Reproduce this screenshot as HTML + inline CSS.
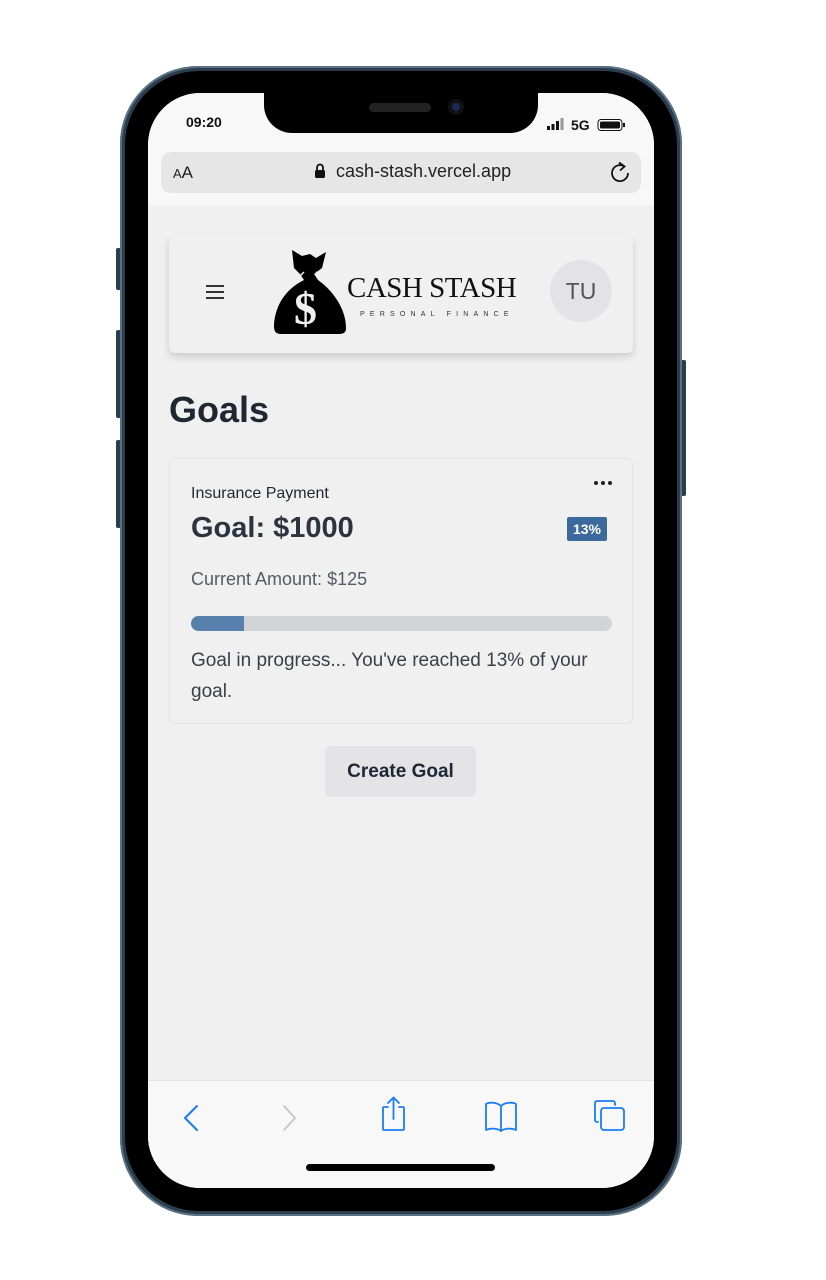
<!DOCTYPE html>
<html><head><meta charset="utf-8">
<style>
*{box-sizing:border-box;margin:0;padding:0}
body{width:826px;height:1280px;background:#fff;position:relative;overflow:hidden;font-family:"Liberation Sans",sans-serif}
.frame{position:absolute;left:120px;top:66px;width:562px;height:1150px;border-radius:78px;background:#2c3e4e;box-shadow:inset 0 0 0 2px #5a7184}
.bezel{position:absolute;left:125px;top:71px;width:552px;height:1140px;border-radius:74px;background:#000}
.screen{position:absolute;left:148px;top:93px;width:506px;height:1095px;border-radius:52px;background:#f0f0f0;overflow:hidden}
.btn{position:absolute;background:#2c3e4e;width:5px;border-radius:2px}
.notch{position:absolute;left:116px;top:0;width:274px;height:40px;background:#000;border-radius:0 0 28px 28px}
.top{position:absolute;left:0;top:0;width:506px;height:113px;background:#f8f8f8}
.url{position:absolute;left:13px;top:59px;width:480px;height:41px;background:#e6e6e6;border-radius:10px}
.hdr{position:absolute;left:21px;top:143px;width:464px;height:117px;background:#f0f0f0;border-radius:6px;box-shadow:0 4px 8px rgba(0,0,0,.15)}
.card{position:absolute;left:21px;top:365px;width:464px;height:266px;border:1px solid #e4e4e4;border-radius:6px}
.bottom{position:absolute;left:0;top:987px;width:506px;height:108px;background:#f8f8f8;border-top:1px solid #e2e2e2}
</style></head><body>
<div class="btn" style="left:116px;top:248px;height:42px"></div>
<div class="btn" style="left:116px;top:330px;height:88px"></div>
<div class="btn" style="left:116px;top:440px;height:88px"></div>
<div class="btn" style="left:681px;top:360px;height:136px"></div>
<div class="frame"></div>
<div class="bezel"></div>
<div class="screen">
 <div class="top"></div>
 <div class="notch"><div style="position:absolute;left:105px;top:10px;width:62px;height:9px;background:#222;border-radius:5px"></div><div style="position:absolute;left:184px;top:6px;width:16px;height:16px;background:#111;border-radius:50%"><div style="margin:4px;width:8px;height:8px;border-radius:50%;background:#1c2a5a"></div></div></div>
 <div style="position:absolute;left:38px;top:21px;font-weight:bold;font-size:14px;color:#111">09:20</div>
 <svg style="position:absolute;left:399px;top:25px" width="80" height="14">
  <rect x="0" y="8" width="3" height="4" fill="#111"/><rect x="4.5" y="6" width="3" height="6" fill="#111"/><rect x="9" y="3" width="3" height="9" fill="#111"/><rect x="13.5" y="0" width="3" height="12" fill="#999"/>
  <text x="24" y="12" font-family="Liberation Sans" font-weight="bold" font-size="14" fill="#111">5G</text>
  <rect x="51" y="1.5" width="24" height="11" rx="3" fill="none" stroke="#111" stroke-width="1"/><rect x="53" y="3.5" width="20" height="7" rx="1.5" fill="#111"/><rect x="76" y="5" width="2" height="4" fill="#111"/>
 </svg>
 <div class="url">
  <div style="position:absolute;left:12px;top:11px;font-size:17px;color:#222"><span style="font-size:13px">A</span>A</div>
  <svg style="position:absolute;left:153px;top:11px" width="12" height="16"><path d="M3 7V4.5a3 3 0 0 1 6 0V7" fill="none" stroke="#111" stroke-width="1.8"/><rect x="1" y="7" width="10" height="8" rx="1.5" fill="#111"/></svg>
  <div style="position:absolute;left:175px;top:9px;font-size:18px;color:#222">cash-stash.vercel.app</div>
  <svg style="position:absolute;left:447px;top:8px" width="24" height="26"><path d="M16.5 6.5A8 8 0 1 0 20 13" fill="none" stroke="#111" stroke-width="1.8"/><path d="M11 2.5l5.5 4-4.5 4" fill="none" stroke="#111" stroke-width="1.8"/></svg>
 </div>
 <div class="hdr">
  <div style="position:absolute;left:37px;top:49px;width:18px;height:2px;background:#333;box-shadow:0 6px 0 #333,0 12px 0 #333"></div>
  <svg style="position:absolute;left:105px;top:12px" width="80" height="86">
   <path d="M18 2l10 6 8-2 6 4 10-6-4 16-8 6 4 6c14 10 28 28 28 48 0 6-4 6-10 6H8c-8 0-8-4-8-10 2-22 14-36 30-44l-4-6-6-6z" fill="#000"/>
   <path d="M30 24l-8 8M42 24l14 10" stroke="#f0f0f0" stroke-width="1.5" fill="none"/>
   <text x="20" y="76" font-family="Liberation Serif" font-weight="bold" font-size="46" fill="#f0f0f0">$</text>
  </svg>
  <div style="position:absolute;left:178px;top:36px;font-family:'Liberation Serif',serif;font-size:29px;color:#111;letter-spacing:-.5px">CASH STASH</div>
  <div style="position:absolute;left:191px;top:75px;font-size:7px;letter-spacing:5.2px;color:#333">PERSONAL FINANCE</div>
  <div style="position:absolute;left:381px;top:24px;width:62px;height:62px;border-radius:50%;background:#e3e3e5;color:#555;font-size:23px;line-height:62px;text-align:center">TU</div>
 </div>
 <div style="position:absolute;left:21px;top:296px;font-size:36px;font-weight:bold;color:#1f2733">Goals</div>
 <div class="card">
  <div style="position:absolute;left:438px;top:22px;width:4px;height:4px;border-radius:50%;background:#222;box-shadow:-7px 0 0 #222,-14px 0 0 #222"></div>
  <div style="position:absolute;left:21px;top:26px;font-size:16px;color:#1f2733">Insurance Payment</div>
  <div style="position:absolute;left:21px;top:53px;font-size:29px;font-weight:bold;color:#2d3440">Goal: $1000</div>
  <div style="position:absolute;left:397px;top:58px;width:40px;height:24px;background:#3d6a9c;color:#fff;font-size:14px;font-weight:bold;line-height:24px;text-align:center;border-radius:2px">13%</div>
  <div style="position:absolute;left:21px;top:110px;font-size:18px;color:#555b66">Current Amount: $125</div>
  <div style="position:absolute;left:21px;top:157px;width:421px;height:15px;background:#d3d4d8;border-radius:8px;overflow:hidden"><div style="width:53px;height:15px;background:#5880ad"></div></div>
  <div style="position:absolute;left:21px;top:186px;width:430px;font-size:19px;line-height:31px;color:#3a3f48">Goal in progress... You've reached 13% of your goal.</div>
 </div>
 <div style="position:absolute;left:177px;top:653px;width:151px;height:51px;background:#e4e4e6;border-radius:6px;font-size:19px;font-weight:bold;color:#1f2733;line-height:51px;text-align:center">Create Goal</div>
 <div class="bottom">
  <svg style="position:absolute;left:0;top:-6px" width="506" height="108" fill="none" stroke-width="2" stroke-linecap="round" stroke-linejoin="round">
   <path d="M49 31l-12 12 12 12" stroke="#1a7cf5"/>
   <path d="M136 31l11 12-11 12" stroke="#c8c8c8"/>
   <path d="M240 32h-4a1 1 0 0 0-1 1v21a1 1 0 0 0 1 1h19a1 1 0 0 0 1-1V33a1 1 0 0 0-1-1h-4M245.5 44V23M240 28l5.5-5.5 5.5 5.5" stroke="#1a7cf5" stroke-width="1.8"/>
   <path d="M353 31v24M353 31c-4-4-12-4-15-2v26c4-2 11-2 15 1c4-3 11-3 15-1V29c-3-2-11-2-15 2" stroke="#1a7cf5" stroke-width="1.8"/>
   <rect x="453" y="33" width="23" height="22" rx="3" stroke="#1a7cf5" stroke-width="1.8"/>
   <path d="M450 47h-1a2 2 0 0 1-2-2V28a2 2 0 0 1 2-2h16a2 2 0 0 1 2 2v2" stroke="#1a7cf5" stroke-width="1.8"/>
  </svg>
  <div style="position:absolute;left:158px;top:83px;width:189px;height:7px;border-radius:4px;background:#000"></div>
 </div>
</div>
</body></html>
